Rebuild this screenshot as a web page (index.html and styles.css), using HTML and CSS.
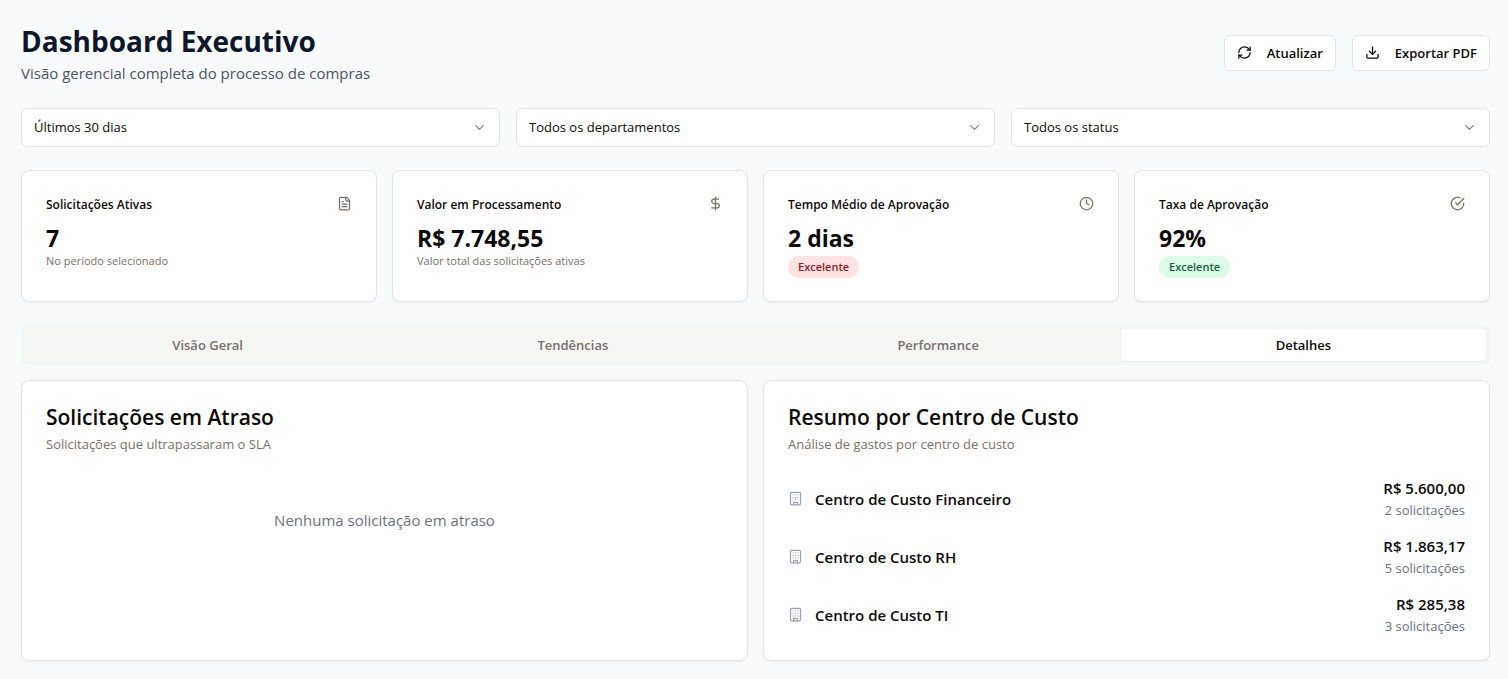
FILE: index.html
```html
<!DOCTYPE html>
<html lang="pt-BR">
<head>
<meta charset="utf-8">
<meta name="viewport" content="width=device-width, initial-scale=1">
<title>Dashboard Executivo</title>
<link rel="stylesheet" href="styles.css">
</head>
<body>
<svg class="sprite" aria-hidden="true">
  <symbol id="chevron" viewBox="0 0 24 24"><path d="m6 9 6 6 6-6"/></symbol>
  <symbol id="building" viewBox="0 0 24 24"><rect width="16" height="20" x="4" y="2" rx="2"/><path d="M9 22v-4h6v4M8 6h.01M16 6h.01M12 6h.01M12 10h.01M12 14h.01M16 10h.01M16 14h.01M8 10h.01M8 14h.01"/></symbol>
</svg>
<main class="page">
  <header class="header">
    <div>
      <h1 class="title">Dashboard Executivo</h1>
      <p class="subtitle">Visão gerencial completa do processo de compras</p>
    </div>
    <div class="actions">
      <button class="button" type="button">
        <svg class="icon" viewBox="0 0 24 24" aria-hidden="true"><path d="M3 12a9 9 0 0 1 9-9 9.75 9.75 0 0 1 6.74 2.74L21 8"/><path d="M21 3v5h-5"/><path d="M21 12a9 9 0 0 1-9 9 9.75 9.75 0 0 1-6.74-2.74L3 16"/><path d="M8 16H3v5"/></svg>
        Atualizar
      </button>
      <button class="button" type="button">
        <svg class="icon" viewBox="0 0 24 24" aria-hidden="true"><path d="M21 15v4a2 2 0 0 1-2 2H5a2 2 0 0 1-2-2v-4"/><path d="m7 10 5 5 5-5"/><path d="M12 15V3"/></svg>
        Exportar PDF
      </button>
    </div>
  </header>

  <div class="filters">
    <div class="filter">
      <select class="select" aria-label="Período"><option>Últimos 30 dias</option></select>
      <svg class="icon chevron" aria-hidden="true"><use href="#chevron"/></svg>
    </div>
    <div class="filter">
      <select class="select" aria-label="Departamento"><option>Todos os departamentos</option></select>
      <svg class="icon chevron" aria-hidden="true"><use href="#chevron"/></svg>
    </div>
    <div class="filter">
      <select class="select" aria-label="Status"><option>Todos os status</option></select>
      <svg class="icon chevron" aria-hidden="true"><use href="#chevron"/></svg>
    </div>
  </div>

  <div class="stats">
    <section class="card stat">
      <div class="stat-head">
        <h2 class="stat-label">Solicitações Ativas</h2>
        <svg class="icon muted" viewBox="0 0 24 24" aria-hidden="true"><path d="M15 2H6a2 2 0 0 0-2 2v16a2 2 0 0 0 2 2h12a2 2 0 0 0 2-2V7Z"/><path d="M14 2v4a2 2 0 0 0 2 2h4"/><path d="M10 9H8M16 13H8M16 17H8"/></svg>
      </div>
      <p class="stat-value">7</p>
      <p class="stat-note">No período selecionado</p>
    </section>
    <section class="card stat">
      <div class="stat-head">
        <h2 class="stat-label">Valor em Processamento</h2>
        <svg class="icon muted" viewBox="0 0 24 24" aria-hidden="true"><path d="M12 2v20"/><path d="M17 5H9.500a3.500 3.500 0 0 0 0 7h5a3.500 3.500 0 0 1 0 7H6"/></svg>
      </div>
      <p class="stat-value">R$ 7.748,55</p>
      <p class="stat-note">Valor total das solicitações ativas</p>
    </section>
    <section class="card stat">
      <div class="stat-head">
        <h2 class="stat-label">Tempo Médio de Aprovação</h2>
        <svg class="icon muted" viewBox="0 0 24 24" aria-hidden="true"><circle cx="12" cy="12" r="10"/><path d="M12 6v6l4 2"/></svg>
      </div>
      <p class="stat-value">2 dias</p>
      <span class="badge badge-red">Excelente</span>
    </section>
    <section class="card stat">
      <div class="stat-head">
        <h2 class="stat-label">Taxa de Aprovação</h2>
        <svg class="icon muted" viewBox="0 0 24 24" aria-hidden="true"><path d="M22 11.080V12a10 10 0 1 1-5.930-9.140"/><path d="m9 11 3 3L22 4"/></svg>
      </div>
      <p class="stat-value">92%</p>
      <span class="badge badge-green">Excelente</span>
    </section>
  </div>

  <div class="tabs" role="tablist">
    <button class="tab" type="button" role="tab" aria-selected="false">Visão Geral</button>
    <button class="tab" type="button" role="tab" aria-selected="false">Tendências</button>
    <button class="tab" type="button" role="tab" aria-selected="false">Performance</button>
    <button class="tab tab-active" type="button" role="tab" aria-selected="true">Detalhes</button>
  </div>

  <div class="panels" role="tabpanel" aria-label="Detalhes">
    <section class="card">
      <h2 class="panel-title">Solicitações em Atraso</h2>
      <p class="panel-note">Solicitações que ultrapassaram o SLA</p>
      <p class="empty">Nenhuma solicitação em atraso</p>
    </section>
    <section class="card">
      <h2 class="panel-title">Resumo por Centro de Custo</h2>
      <p class="panel-note">Análise de gastos por centro de custo</p>
      <ul class="centers">
        <li class="center">
          <svg class="icon center-icon" aria-hidden="true"><use href="#building"/></svg>
          <span class="center-name">Centro de Custo Financeiro</span>
          <div class="center-total"><p class="amount">R$ 5.600,00</p><p class="count">2 solicitações</p></div>
        </li>
        <li class="center">
          <svg class="icon center-icon" aria-hidden="true"><use href="#building"/></svg>
          <span class="center-name">Centro de Custo RH</span>
          <div class="center-total"><p class="amount">R$ 1.863,17</p><p class="count">5 solicitações</p></div>
        </li>
        <li class="center">
          <svg class="icon center-icon" aria-hidden="true"><use href="#building"/></svg>
          <span class="center-name">Centro de Custo TI</span>
          <div class="center-total"><p class="amount">R$ 285,38</p><p class="count">3 solicitações</p></div>
        </li>
      </ul>
    </section>
  </div>
</main>
</body>
</html>
```
FILE: styles.css
```css
* { box-sizing: border-box; }

body, h1, h2, p, ul { margin: 0; }

body {
  background: #f9fafc;
  color: #0c0a09;
  font-family: "Segoe UI", "Open Sans", "Noto Sans", sans-serif;
  font-size: 15px;
  line-height: 24px;
}

button, select { font: inherit; color: inherit; }

.sprite { display: none; }

.page { padding: 22px 18px 18px 21px; }

.header {
  display: flex;
  justify-content: space-between;
  align-items: center;
  margin-bottom: 21px;
}

.title {
  color: #0f172a;
  font-size: 28px;
  font-weight: 700;
  line-height: 38px;
}

.subtitle { color: #4b5563; font-size: 15px; line-height: 27px; }

.actions { display: flex; gap: 16px; margin-bottom: 4px; }

.icon {
  width: 15px;
  height: 15px;
  flex: none;
  fill: none;
  stroke: currentColor;
  stroke-width: 2;
  stroke-linecap: round;
  stroke-linejoin: round;
}

.button {
  display: flex;
  align-items: center;
  gap: 15px;
  height: 36px;
  padding: 0 12px;
  background: #fff;
  border: 1px solid #e7e5e4;
  border-radius: 6px;
  font-size: 13px;
  font-weight: 600;
}

.filters {
  display: grid;
  grid-template-columns: repeat(3, 1fr);
  gap: 16px;
  margin-bottom: 23px;
}

.filter { display: grid; align-items: center; }

.select {
  grid-area: 1 / 1;
  width: 100%;
  height: 39px;
  padding: 0 12px 2px;
  appearance: none;
  background: #fff;
  border: 1px solid #e7e5e4;
  border-radius: 6px;
  font-size: 13px;
}

.chevron {
  grid-area: 1 / 1;
  justify-self: end;
  margin-right: 13px;
  color: #858382;
  pointer-events: none;
}

.card {
  background: #fff;
  border: 1px solid #e7e5e4;
  border-radius: 8px;
  padding: 24px;
  box-shadow: 0 1px 2px rgb(0 0 0 / 5%);
}

.stats {
  display: grid;
  grid-template-columns: repeat(4, 1fr);
  gap: 15px;
  margin-bottom: 23px;
}

.stat { padding-bottom: 23px; }

.stat-head {
  display: flex;
  justify-content: space-between;
  margin-bottom: 8px;
}

.stat-label { font-size: 12px; font-weight: 600; line-height: 20px; }

.muted { color: #78716c; margin-top: 1px; }

.stat-value { font-size: 23px; font-weight: 700; line-height: 30px; }

.stat-note { color: #78716c; font-size: 11px; line-height: 16px; }

.badge {
  display: block;
  width: fit-content;
  margin-top: 3px;
  padding: 0 10px;
  border-radius: 11px;
  font-size: 11px;
  font-weight: 600;
  line-height: 22px;
}

.badge-red { background: #fee2e2; color: #991b1b; }

.badge-green { background: #dcfce7; color: #166534; }

.tabs {
  display: grid;
  grid-template-columns: repeat(4, 1fr);
  padding: 4px;
  margin-bottom: 15px;
  background: #f5f5f4;
  border-radius: 6px;
}

.tab {
  height: 32px;
  padding: 0 12px;
  background: none;
  border: 0;
  border-radius: 4px;
  color: #78716c;
  font-size: 13px;
  font-weight: 600;
}

.tab-active {
  background: #fff;
  color: #0c0a09;
  box-shadow: 0 1px 2px rgb(0 0 0 / 5%);
}

.panels {
  display: grid;
  grid-template-columns: repeat(2, 1fr);
  gap: 15px;
}

.panel-title { font-size: 21px; font-weight: 600; line-height: 24px; }

.panel-note { margin-top: 4px; color: #78716c; font-size: 13px; line-height: 22px; }

.empty {
  padding: 53px 0;
  color: #6b7280;
  text-align: center;
}

.centers {
  display: grid;
  gap: 15px;
  padding: 22px 0 0;
  list-style: none;
}

.center { display: flex; align-items: center; }

.center-icon { color: #9ca3af; }

.center-name { margin-left: 12px; font-weight: 600; }

.center-total { margin-left: auto; text-align: right; }

.amount { font-weight: 600; line-height: 23px; }

.count { color: #6b7280; font-size: 13px; line-height: 20px; }
```
